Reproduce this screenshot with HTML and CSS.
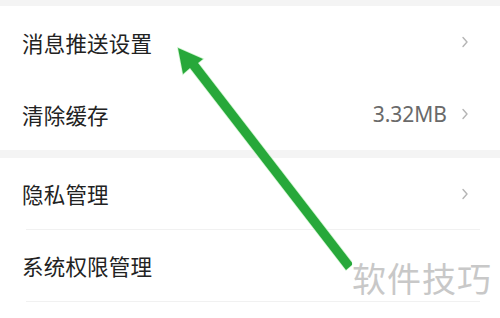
FILE: index.html
```html
<!DOCTYPE html>
<html lang="zh">
<head>
<meta charset="utf-8">
<link rel="stylesheet" href="styles.css">
</head>
<body>
<div class="page">
  <div class="group">
    <div class="row">
      <span class="label">消息推送设置</span>
      <span class="right"><svg class="chev" viewBox="0 0 8 12"><path d="M2 1.5 L6 6 L2 10.5" /></svg></span>
    </div>
    <div class="row">
      <span class="label">清除缓存</span>
      <span class="right"><span class="value">3.32MB</span><svg class="chev" viewBox="0 0 8 12"><path d="M2 1.5 L6 6 L2 10.5" /></svg></span>
    </div>
  </div>
  <div class="group fill">
    <div class="row sep">
      <span class="label">隐私管理</span>
      <span class="right"><svg class="chev" viewBox="0 0 8 12"><path d="M2 1.5 L6 6 L2 10.5" /></svg></span>
    </div>
    <div class="row sep">
      <span class="label">系统权限管理</span>
      <span class="right"></span>
    </div>
  </div>
  <svg class="arrow" viewBox="0 0 500 318" width="500" height="318">
    <g stroke="#b8f0b8" stroke-width="1.5" fill="none" opacity="0.7">
      <polygon points="178,48 183,74 190,68 346,270 353,264 198,63 203,59" />
    </g>
    <polygon fill="#27a83a" points="178,48 183,74 190,68 346,270 353,264 198,63 203,59" />
  </svg>
  <div class="watermark">软件技巧</div>
</div>
</body>
</html>
```
FILE: styles.css
```css
html, body {
  margin: 0;
  padding: 0;
}
body {
  background: #f4f4f4;
  font-family: "Noto Sans CJK SC", "Noto Sans", sans-serif;
  width: 500px;
  height: 318px;
  overflow: hidden;
}
.page {
  position: relative;
  width: 500px;
  height: 318px;
  padding-top: 6px;
  box-sizing: border-box;
  display: flex;
  flex-direction: column;
  gap: 8px;
}
.group {
  background: #fff;
  display: flex;
  flex-direction: column;
}
.group.fill {
  flex: 1;
}
.row {
  height: 72px;
  display: flex;
  align-items: center;
  justify-content: space-between;
  padding: 0 31px 0 22px;
  box-sizing: border-box;
}
.row.sep {
  border-bottom: 1px solid #f1f1f1;
  margin-left: 26px;
  margin-right: 20px;
  padding-left: 0;
  padding-right: 11px;
}
.row.sep .label {
  margin-left: -4px;
}
.label {
  font-size: 21.5px;
  color: #222;
  letter-spacing: 0.2px;
}
.right {
  display: flex;
  align-items: center;
  gap: 14px;
}
.value {
  font-family: "Noto Sans", sans-serif;
  font-size: 21px;
  color: #6a6a6a;
}
.chev {
  width: 8px;
  height: 12px;
}
.chev path {
  fill: none;
  stroke: #b5b5b5;
  stroke-width: 1.4;
  stroke-linecap: round;
  stroke-linejoin: round;
}
.arrow {
  position: absolute;
  left: 0;
  top: 0;
}
.watermark {
  position: absolute;
  left: 352px;
  top: 255px;
  font-size: 34px;
  color: #c8c8c8;
  background: rgba(255,255,255,0.9);
  line-height: 46px;
  letter-spacing: 1px;
}
```
